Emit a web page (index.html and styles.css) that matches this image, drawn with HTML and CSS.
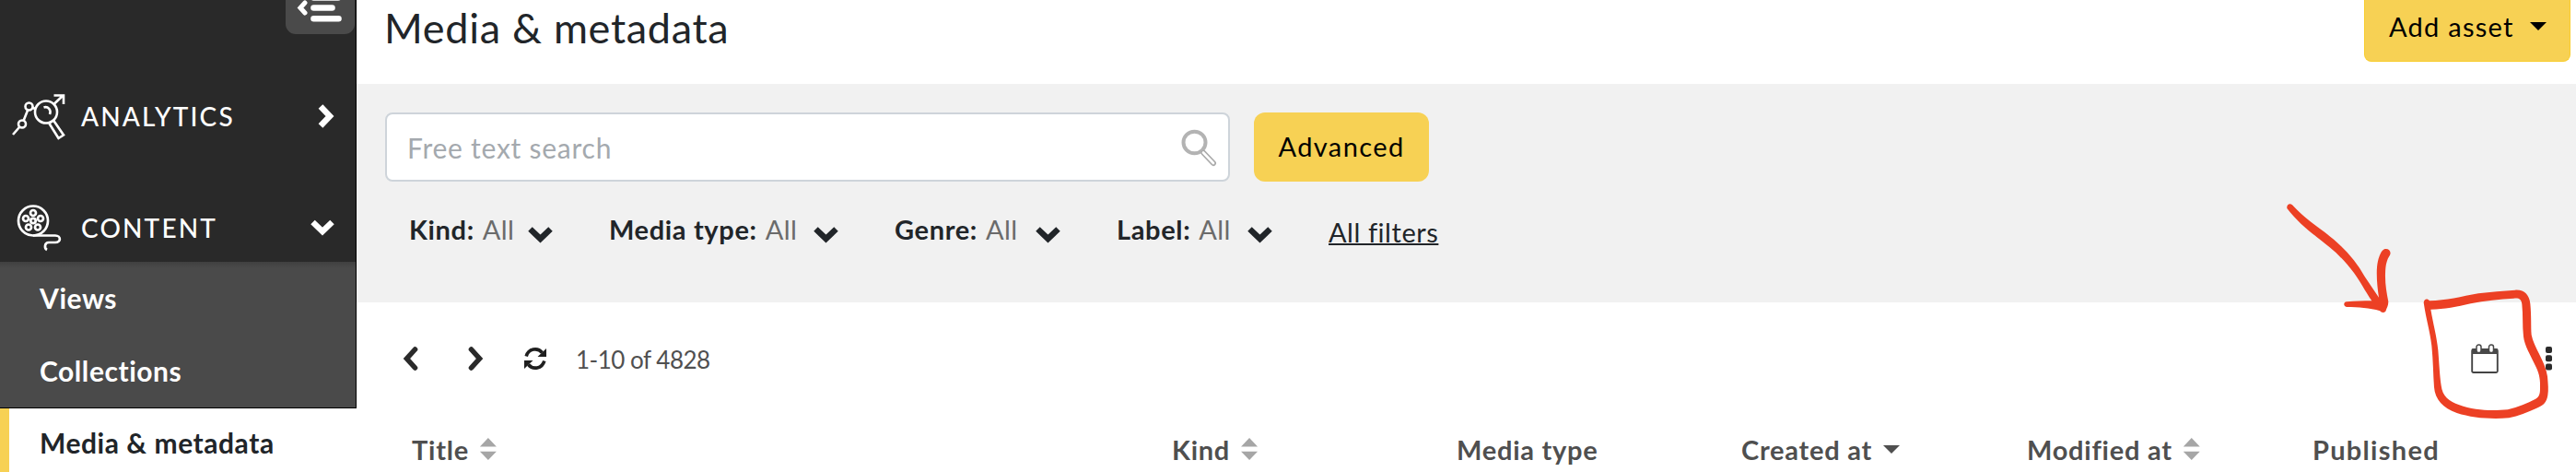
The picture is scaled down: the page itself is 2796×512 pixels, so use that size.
FILE: index.html
```html
<!DOCTYPE html>
<html lang="en">
<head>
    <meta charset="UTF-8">
    <meta name="viewport" content="width=device-width, initial-scale=1.0">
    <title>Media &amp; metadata</title>
    <link rel="stylesheet" href="styles.css">
</head>
<body>
    <div class="sidebar">
        <div class="menu-toggle">
            <svg width="75" height="37" viewBox="0 0 75 37">
                <path d="M21 3 L16 8.500 L21 14" fill="none" stroke="#fff" stroke-width="5" stroke-linecap="round"/>
                <path d="M30.500 -2.500 H57 M30.500 8.500 H50.500 M30.500 20.200 H57.500" fill="none" stroke="#fff" stroke-width="6.600" stroke-linecap="round"/>
            </svg>
        </div>
        <div class="menu-item analytics">
            <svg class="menu-icon" width="60" height="52" viewBox="0 0 60 52" fill="none" stroke="#fff" stroke-width="2.600">
                <path d="M2 46 L9 38 M13.500 31 L18.500 18.500 M23 16.500 L26 18"/>
                <circle cx="12" cy="34.500" r="4"/>
                <circle cx="19.500" cy="15.500" r="4"/>
                <circle cx="38" cy="21.500" r="12"/>
                <path d="M35.500 16.500 C40 15 44 19 42 24"/>
                <path d="M47 12.500 L56 4 M46.500 3.500 H57 V13"/>
                <path d="M41.500 34 L51.500 50 L57 46.500 L46 30.500"/>
            </svg>
            <span class="menu-text">ANALYTICS</span>
            <svg class="arrow-right" width="20" height="28" viewBox="0 0 20 28"><path d="M4 3.500 L14 14 L4 24.500" fill="none" stroke="#fff" stroke-width="6.500"/></svg>
        </div>
        <div class="menu-item content">
            <svg class="menu-icon" width="60" height="52" viewBox="0 0 60 52" fill="none" stroke="#fff" stroke-width="2.700">
                <circle cx="24" cy="18.500" r="16"/>
                <circle cx="24" cy="18.500" r="2.700"/>
                <circle cx="24" cy="10" r="3"/>
                <circle cx="32" cy="16" r="3"/>
                <circle cx="29" cy="25.500" r="3"/>
                <circle cx="19" cy="25.500" r="3"/>
                <circle cx="16" cy="16" r="3"/>
                <path d="M24 34.500 H48 C54.500 34.500 54.500 42 48 42 H41 C36 42 36 48.500 39 50"/>
            </svg>
            <span class="menu-text">CONTENT</span>
            <svg class="arrow-down" width="28" height="20" viewBox="0 0 28 20"><path d="M3.500 4 L14 14 L24.500 4" fill="none" stroke="#fff" stroke-width="6.500"/></svg>
        </div>
        <div class="submenu">
            <div class="submenu-item views">Views</div>
            <div class="submenu-item collections">Collections</div>
        </div>
        <div class="submenu-item active">Media &amp; metadata</div>
    </div>
    <div class="main">
        <div class="header">
            <h1 class="page-title">Media &amp; metadata</h1>
            <div class="add-btn"><span>Add asset</span><i class="caret"></i></div>
        </div>
        <div class="search-panel">
            <div class="search-row">
                <div class="search-box">
                    <span class="placeholder">Free text search</span>
                    <svg width="40" height="42" viewBox="0 0 40 42" fill="none">
                        <ellipse cx="15.500" cy="15.500" rx="12" ry="11.800" stroke="#b3b3b3" stroke-width="4"/>
                        <path d="M25.500 27 L36 38" stroke="#aaa" stroke-width="6" stroke-linecap="round"/>
                        <path d="M25 26.500 L36 38" stroke="#fff" stroke-width="2.600" stroke-linecap="round"/>
                    </svg>
                </div>
                <div class="advanced-btn">Advanced</div>
            </div>
            <div class="filters">
                <div class="filter kind"><b>Kind:</b><span class="value">All</span><svg width="29" height="19" viewBox="0 0 29 19"><path d="M3.500 3.500 L14.500 14 L25.500 3.500" fill="none" stroke="#212529" stroke-width="6.500"/></svg></div>
                <div class="filter media-type"><b>Media type:</b><span class="value">All</span><svg width="29" height="19" viewBox="0 0 29 19"><path d="M3.500 3.500 L14.500 14 L25.500 3.500" fill="none" stroke="#212529" stroke-width="6.500"/></svg></div>
                <div class="filter genre"><b>Genre:</b><span class="value">All</span><svg width="29" height="19" viewBox="0 0 29 19"><path d="M3.500 3.500 L14.500 14 L25.500 3.500" fill="none" stroke="#212529" stroke-width="6.500"/></svg></div>
                <div class="filter label"><b>Label:</b><span class="value">All</span><svg width="29" height="19" viewBox="0 0 29 19"><path d="M3.500 3.500 L14.500 14 L25.500 3.500" fill="none" stroke="#212529" stroke-width="6.500"/></svg></div>
                <span class="all-filters">All filters</span>
            </div>
        </div>
        <div class="toolbar">
            <svg class="prev" width="17" height="26" viewBox="0 0 17 26"><path d="M13.500 3 L4.500 13 L13.500 23" fill="none" stroke="#2a2a2a" stroke-width="5.600" stroke-linecap="round"/></svg>
            <svg class="next" width="17" height="26" viewBox="0 0 17 26"><path d="M3.500 3 L12.500 13 L3.500 23" fill="none" stroke="#2a2a2a" stroke-width="5.600" stroke-linecap="round"/></svg>
            <svg class="refresh" width="24" height="24" viewBox="0 0 24 24">
                <path d="M2.200 9.500 C4.500 1 14.500 -0.500 19.500 5.500 M21.800 14.500 C19.500 23 9.500 24.500 4.500 18.500" fill="none" stroke="#1f1f1f" stroke-width="3.600"/>
                <path d="M24 1 V10 H14.500 Z M0 23 V14 H9.500 Z" fill="#1f1f1f"/>
            </svg>
            <span class="page-info">1-10 of 4828</span>
            <svg class="calendar" width="30" height="32" viewBox="0 0 30 32">
                <rect x="1.200" y="6" width="27.600" height="25" rx="1.500" fill="#fff" stroke="#444" stroke-width="1.900"/>
                <path d="M1 5.500 H29 V11 H1 Z" fill="#484848"/>
                <rect x="6" y="1" width="5" height="8.500" rx="2.300" fill="#fff" stroke="#484848" stroke-width="1.500"/>
                <rect x="19.500" y="1" width="5" height="8.500" rx="2.300" fill="#fff" stroke="#484848" stroke-width="1.500"/>
            </svg>
            <svg class="dots" width="7" height="26" viewBox="0 0 7 26" fill="#2b2b2b">
                <rect width="7" height="7" rx="2"/>
                <rect y="9.200" width="7" height="7" rx="2"/>
                <rect y="18.400" width="7" height="7" rx="2"/>
            </svg>
        </div>
        <div class="table-head">
            <div class="th title"><span>Title</span><i class="sort"></i></div>
            <div class="th kind"><span>Kind</span><i class="sort"></i></div>
            <div class="th media"><span>Media type</span></div>
            <div class="th created"><span>Created at</span><i class="caret"></i></div>
            <div class="th modified"><span>Modified at</span><i class="sort"></i></div>
            <div class="th published"><span>Published</span></div>
        </div>
    </div>
    <!-- hand drawn marker over the toolbar -->
    <svg class="marker" width="396" height="312" viewBox="0 0 1188 936">
        <g fill="#ec4024">
            <path d="M247 78 C245 66 256 60 264 67 C310 118 350 138 400 180 C440 215 475 255 500 300 L546 368 C540 330 536 280 543 250 C548 230 554 216 564 211 C577 207 588 218 582 230 C572 245 568 260 567 290 C566 325 571 350 577 382 C577 395 572 402 568 413 C562 419 554 417 550 412 C515 401 480 400 441 399 C430 397 430 383 441 382 C470 379 495 379 523 379 C500 345 485 315 465 288 C440 256 415 228 385 204 C345 170 290 135 247 78 Z"/>
            <path fill-rule="evenodd" d="M692 385 C693 373 704 370 711 379 C765 378 815 365 870 355 C910 350 950 347 990 344 C1020 342 1036 360 1039 388 C1043 430 1041 460 1043 490 C1050 530 1088 575 1095 625 C1097 650 1099 670 1096 686 C1092 710 1083 718 1060 728 C1030 742 1000 753 970 760 C910 765 850 760 800 744 C755 728 729 700 726 660 C723 620 723 575 718 525 C712 475 700 440 692 385 Z M715 407 C723 455 734 490 739 540 C743 590 744 620 749 655 C753 690 775 706 808 718 C860 738 920 737 966 733 C1000 725 1030 712 1055 699 C1067 693 1071 684 1071 665 C1072 640 1070 620 1058 595 C1040 555 1020 525 1017 495 C1013 460 1016 425 1012 390 C1010 373 1002 369 985 371 C940 374 890 378 845 388 C800 398 760 407 715 407 Z"/>
        </g>
    </svg>
</body>
</html>
```

FILE: styles.css
```css
body{
    margin:0;
    width:2796px;
    height:512px;
    overflow:hidden;
    display:flex;
    position:relative;
    background:#fff;
    color:#212529;
    font-family:Lato, "Open Sans", sans-serif;
    font-size:29px;
    white-space:nowrap;
}
svg{
    display:block;
    flex-shrink:0;
}
.sidebar{
    width:387px;
    height:512px;
    flex-shrink:0;
    background:#fff;
}
.menu-toggle{
    box-sizing:border-box;
    width:387px;
    height:65px;
    padding-left:310px;
    background:#292929;
    border-right:1px solid #000;
}
.menu-toggle svg{
    background:#4a4a4a;
    border-radius:0 0 11px 11px;
}
.menu-item{
    box-sizing:border-box;
    width:387px;
    display:flex;
    align-items:center;
    background:#292929;
    border-right:1px solid #000;
    color:#fff;
}
.analytics{
    height:121px;
}
.content{
    height:98px;
    padding-top:24px;
}
.menu-icon{
    margin-left:12px;
    margin-right:16px;
}
.menu-text{
    font-size:28px;
    font-weight:500;
    letter-spacing:2.15px;
}
.arrow-right{
    margin-left:auto;
    margin-right:22px;
}
.arrow-down{
    margin-left:auto;
    margin-right:22px;
}
.submenu{
    box-sizing:border-box;
    width:387px;
    height:159px;
    background:linear-gradient(#404040, #4a4a4a 7px);
    border-right:1px solid #000;
    border-bottom:1px solid #000;
    color:#fff;
}
.submenu-item{
    height:79px;
    padding-left:43px;
    line-height:79px;
    font-size:30px;
    font-weight:700;
    letter-spacing:.55px;
}
.active{
    padding-left:33px;
    border-left:10px solid #f7d154;
    background:#fff;
    line-height:75px;
}
.main{
    flex:1;
}
.header{
    height:91px;
    display:flex;
    justify-content:space-between;
}
.page-title{
    margin:0 0 0 30px;
    font-size:45px;
    line-height:61px;
    font-weight:400;
    letter-spacing:.7px;
}
.add-btn{
    box-sizing:border-box;
    display:flex;
    align-items:center;
    width:224px;
    height:67px;
    margin-right:6px;
    padding:0 25px 10px 26px;
    justify-content:space-between;
    border:1px solid #f9cd2e;
    border-top:0;
    border-radius:0 0 8px 8px;
    background:#f7d154;
    color:#000;
    letter-spacing:1.25px;
}
.caret{
    border:9px solid transparent;
    border-top-color:currentColor;
    border-bottom:0;
}
.search-panel{
    box-sizing:border-box;
    height:237px;
    padding:31px 0 0 31px;
    background:#f1f1f1;
}
.search-row{
    display:flex;
    gap:26px;
}
.search-box{
    box-sizing:border-box;
    width:917px;
    height:75px;
    padding:0 12px 0 22px;
    display:flex;
    align-items:center;
    justify-content:space-between;
    border:2px solid #ced4da;
    border-radius:8px;
    background:#fff;
}
.placeholder{
    font-size:30px;
    letter-spacing:.75px;
    color:#a4a9ae;
}
.advanced-btn{
    width:190px;
    height:75px;
    line-height:73px;
    border-radius:12px;
    background:#f7d154;
    color:#000;
    text-align:center;
    letter-spacing:1.4px;
}
.filters{
    display:flex;
    align-items:center;
    gap:60px;
    height:60px;
    margin:21px 0 0 26px;
}
.filter{
    display:flex;
    align-items:center;
}
.filter b{
    letter-spacing:.65px;
}
.filter svg{
    margin-top:12px;
    margin-left:auto;
}
.value{
    margin-left:9px;
    color:#6b6b6b;
    letter-spacing:.4px;
}
.filter.kind{ width:157px; }
.filter.media-type{ width:250px; }
.filter.genre{ width:181px; }
.filter.label{ width:170px; }
.all-filters{
    margin-top:6px;
    letter-spacing:.55px;
    text-decoration:underline;
    text-decoration-thickness:2px;
}
.toolbar{
    display:flex;
    align-items:center;
    height:121px;
    padding:0 26px 0 50px;
}
.next{
    margin-left:54px;
}
.refresh{
    margin-left:44px;
}
.page-info{
    margin-top:3px;
    margin-left:32px;
    font-size:26px;
    letter-spacing:-.5px;
    color:#505050;
}
.calendar{
    margin-left:auto;
}
.dots{
    margin-left:51px;
}
.table-head{
    display:grid;
    grid-template-columns:825px 309px 309px 310px 310px 1fr;
    height:63px;
    padding-left:60px;
}
.th{
    display:flex;
    align-items:center;
    height:76px;
    font-weight:700;
    color:#4f4f4f;
    letter-spacing:.75px;
}
.published{
    letter-spacing:1.3px;
}
.th .caret{
    margin-left:12px;
}
.sort{
    width:18px;
    height:24px;
    margin-left:12px;
    background:#a6a6a6;
    clip-path:polygon(50% 0, 100% 40%, 0 40%, 0 61%, 100% 61%, 50% 100%, 0 61%, 0 40%);
}
.marker{
    position:absolute;
    left:2400px;
    top:200px;
}
```
